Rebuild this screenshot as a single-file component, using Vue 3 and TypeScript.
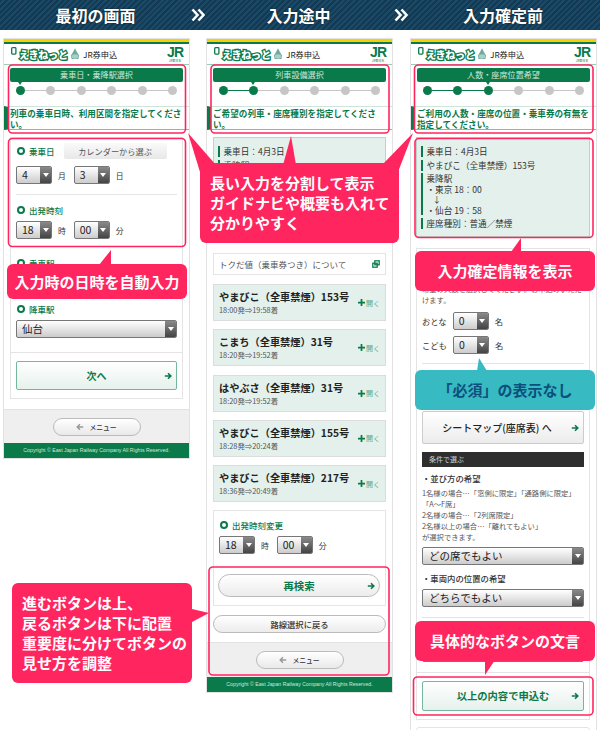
<script setup lang="ts">
interface Phone { id: number; title: string; step: string; active: number; msg: string }
const phones: Phone[] = [
  { id: 1, title: '最初の画面', step: '乗車日・乗降駅選択', active: 0, msg: '列車の乗車日時、利用区間を指定してください。' },
  { id: 2, title: '入力途中', step: '列車設備選択', active: 1, msg: 'ご希望の列車・座席種別を指定してください。' },
  { id: 3, title: '入力確定前', step: '人数・座席位置希望', active: 2, msg: 'ご利用の人数・座席の位置・乗車券の有無を指定してください。' },
]
const dots = [0, 1, 2, 3, 4, 5]
const trains = [
  { name: 'やまびこ（全車禁煙）153号', time: '18:00発⇒19:58着' },
  { name: 'こまち（全車禁煙）31号', time: '18:20発⇒19:52着' },
  { name: 'はやぶさ（全車禁煙）31号', time: '18:20発⇒19:52着' },
  { name: 'やまびこ（全車禁煙）155号', time: '18:28発⇒20:24着' },
  { name: 'やまびこ（全車禁煙）217号', time: '18:36発⇒20:49着' },
]
</script>

<template>
  <div class="page">
    <header class="tops">
      <h2 class="t1">最初の画面</h2>
      <svg class="chev" viewBox="0 0 14 14" width="14" height="14" fill="none" stroke="#fff" stroke-width="2.6"><path d="M1.5 1.5 6.5 7 1.5 12.5M7.5 1.5 12.5 7 7.5 12.5" /></svg>
      <h2 class="t2">入力途中</h2>
      <svg class="chev" viewBox="0 0 14 14" width="14" height="14" fill="none" stroke="#fff" stroke-width="2.6"><path d="M1.5 1.5 6.5 7 1.5 12.5M7.5 1.5 12.5 7 7.5 12.5" /></svg>
      <h2 class="t3">入力確定前</h2>
    </header>

    <main class="cols">
      <section v-for="p in phones" :key="p.id" class="phone" :class="'ph' + p.id">
        <div class="brand">
          <svg class="ticket" viewBox="0 0 6 8" width="6" height="8"><rect x=".7" y=".7" width="4.2" height="6.4" rx=".8" fill="#fff" stroke="#0b7a4b" stroke-width="1.3" /></svg>
          <span class="logo">えきねっと</span>
          <svg class="mascot" viewBox="0 0 12 14" width="10" height="12"><path d="M6 0 8 4 11 9 10 13H2L1 9 4 4Z" fill="#6fa9a0"/><ellipse cx="6" cy="10" rx="4" ry="2.6" fill="#a9cfc8"/></svg>
          <span class="brand-t">JR券申込</span>
          <span class="jr"><b>JR</b><i>JR東日本</i></span>
        </div>
        <div class="banner">{{ p.step }}</div>
        <div class="track">
          <template v-for="d in dots" :key="d">
            <span class="dot" :class="{ on: d <= p.active, cur: d === p.active }"></span>
            <span v-if="d < 5" class="seg" :class="{ on: d < p.active }"></span>
          </template>
        </div>
        <p class="msg">{{ p.msg }}</p>

        <template v-if="p.id === 1">
          <div class="box form1">
            <div class="lab-row">
              <span class="lab">乗車日</span>
              <span class="cal">カレンダーから選ぶ</span>
            </div>
            <div class="sel-row">
              <span class="sel"><em>4</em><i></i></span><span class="unit">月</span>
              <span class="sel"><em>3</em><i></i></span><span class="unit">日</span>
            </div>
            <hr class="rule r1" />
            <span class="lab">出発時刻</span>
            <div class="sel-row s2">
              <span class="sel"><em>18</em><i></i></span><span class="unit">時</span>
              <span class="sel"><em>00</em><i></i></span><span class="unit">分</span>
            </div>
            <span class="lab l3">乗車駅</span>
            <span class="sel wide w1"><em></em><i></i></span>
            <span class="lab l4">降車駅</span>
            <span class="sel wide w2"><em>仙台</em><i></i></span>
            <hr class="rule r2" />
            <div class="next">次へ<svg class="arr" viewBox="0 0 10 10" width="8" height="8" fill="none" stroke="#0b7a4b" stroke-width="2"><path d="M1 5H8M5 1.5 8.5 5 5 8.5" /></svg></div>
          </div>
          <div class="foot-area f1"><span class="menu"><svg viewBox="0 0 10 10" width="8" height="8" fill="none" stroke="#999" stroke-width="1.8"><path d="M9 5H2M5 1.5 1.5 5 5 8.5" /></svg>メニュー</span></div>
        </template>

        <template v-else-if="p.id === 2">
          <div class="summary s-2">
            <p class="sum-l">乗車日：4月3日</p>
            <p class="sum-l">乗降駅</p>
          </div>
          <div class="tokuda">トクだ値（乗車券つき）について
            <svg viewBox="0 0 10 10" width="8" height="8" fill="none" stroke="#0b7a4b" stroke-width="1.6"><rect x="3.5" y="1" width="5.5" height="5"/><rect x="1" y="4" width="5.5" height="5"/></svg>
          </div>
          <div v-for="t in trains" :key="t.name + t.time" class="train">
            <div>
              <div class="tn">{{ t.name }}</div>
              <div class="tt">{{ t.time }}</div>
            </div>
            <span class="open"><svg viewBox="0 0 8 8" width="7" height="7"><path d="M3 0H5V3H8V5H5V8H3V5H0V3H3Z" fill="#0b7a4b" /></svg>開く</span>
          </div>
          <div class="box form2">
            <span class="lab">出発時刻変更</span>
            <div class="sel-row s3">
              <span class="sel"><em>18</em><i></i></span><span class="unit">時</span>
              <span class="sel"><em>00</em><i></i></span><span class="unit">分</span>
            </div>
            <div class="research">再検索<svg class="arr" viewBox="0 0 10 10" width="8" height="8" fill="none" stroke="#0b7a4b" stroke-width="2"><path d="M1 5H8M5 1.5 8.5 5 5 8.5" /></svg></div>
          </div>
          <div class="backroute">路線選択に戻る</div>
          <div class="foot-area f2"><span class="menu"><svg viewBox="0 0 10 10" width="8" height="8" fill="none" stroke="#999" stroke-width="1.8"><path d="M9 5H2M5 1.5 1.5 5 5 8.5" /></svg>メニュー</span></div>
        </template>

        <template v-else>
          <div class="summary s-3">
            <p class="sum-l">乗車日：4月3日</p>
            <p class="sum-l">やまびこ（全車禁煙）153号</p>
            <div class="sum-l multi">乗降駅<br />・東京 18：00<br /><span class="down">↓</span><br />・仙台 19：58</div>
            <p class="sum-l">座席種別：普通／禁煙</p>
          </div>
          <div class="box form3">
            <p class="note nt">希望の人数を選択してください。お申込みいただ</p>
            <p class="note">けます。</p>
            <div class="pax"><span>おとな</span><span class="sel"><em>0</em><i></i></span><span>名</span></div>
            <div class="pax pax2"><span>こども</span><span class="sel"><em>0</em><i></i></span><span>名</span></div>
            <hr class="rule r3" />
            <div class="seatmap">シートマップ(座席表) へ<svg class="arr" viewBox="0 0 10 10" width="8" height="8" fill="none" stroke="#0b7a4b" stroke-width="2"><path d="M1 5H8M5 1.5 8.5 5 5 8.5" /></svg></div>
            <div class="cond">条件で選ぶ</div>
            <p class="sub">・並び方の希望</p>
            <p class="note n5">1名様の場合…「窓側に限定」「通路側に限定」<br />「A〜F席」<br />2名様の場合…「2列席限定」<br />2名様以上の場合…「離れてもよい」<br />が選択できます。</p>
            <span class="sel wide w3"><em>どの席でもよい</em><i></i></span>
            <p class="sub s2nd">・車両内の位置の希望</p>
            <span class="sel wide w3 w4"><em>どちらでもよい</em><i></i></span>
            <hr class="rule r4" />
            <span class="sel wide w5"><em></em><i></i></span>
            <hr class="rule r5" />
            <div class="apply">以上の内容で申込む<svg class="arr" viewBox="0 0 10 10" width="8" height="8" fill="none" stroke="#0b7a4b" stroke-width="2"><path d="M1 5H8M5 1.5 8.5 5 5 8.5" /></svg></div>
          </div>
          <div class="box last"></div>
        </template>

        <footer v-if="p.id !== 3" class="copy">Copyright © East Japan Railway Company All Rights Reserved.</footer>
      </section>
    </main>

    <svg class="marks" width="600" height="730" viewBox="0 0 600 730" fill="none">
      <g stroke="#ff2660" stroke-width="1.6">
        <rect x="8.5" y="65" width="177" height="68" rx="4" />
        <rect x="8.5" y="138.5" width="177" height="108" rx="4" />
        <rect x="211" y="65" width="178" height="68" rx="4" />
        <rect x="414.5" y="65" width="178.5" height="68" rx="4" />
        <rect x="415" y="138.5" width="178" height="99" rx="4" />
        <rect x="209" y="567" width="180" height="108" rx="4" />
        <rect x="413.5" y="677" width="179.5" height="38" rx="4" />
      </g>
      <g fill="#ff2660" stroke="none">
        <path d="M99 265 111 250 111 265Z" />
        <path d="M188 133 216 165 200 172Z" />
        <path d="M291 136 296 165 283 165Z" />
        <path d="M413 133 382 165 398 172Z" />
        <path d="M511 252 521 238 521 252Z" />
        <path d="M192 609 209 613 192 622Z" />
        <path d="M485 660 495 660 485 675Z" />
      </g>
      <path d="M477 371 479 358 487 371Z" fill="#38bac2" />
    </svg>

    <div class="call c1">入力時の日時を自動入力</div>
    <div class="call c2">長い入力を分割して表示<br />ガイドナビや概要も入れて<br />分かりやすく</div>
    <div class="call c3">進むボタンは上、<br />戻るボタンは下に配置<br />重要度に分けてボタンの<br />見せ方を調整</div>
    <div class="call c4">入力確定情報を表示</div>
    <div class="call c5">「必須」の表示なし</div>
    <div class="call c6">具体的なボタンの文言</div>
  </div>
</template>

<style>
html, body { margin: 0; background: #fff; }
</style>

<style scoped>
.page { position: relative; width: 600px; height: 730px; overflow: hidden; background: #fff; font-family: "Noto Sans CJK JP", "Noto Sans", sans-serif; color: #333; }
p, h2 { margin: 0; }

.tops { display: grid; grid-template-columns: 191px 14px 187px 18px 1fr; align-items: center; justify-items: center; height: 30px; background: repeating-linear-gradient(135deg, #123a55 0 2px, #1c4a66 2px 4px); color: #fff; }
.tops h2 { font-size: 16px; line-height: 30px; font-weight: 700; text-align: center; text-shadow: 0 0 2px rgba(0,0,0,.6); }
.t3 { padding-right: 4px; }

.cols { display: grid; grid-template-columns: 185px 185px 186px; column-gap: 18px; padding: 8px 0 0 4px; align-items: start; }
.ph3 { margin-left: 1px; }
.phone { background: #fff; box-shadow: 0 0 0 1px #e2e2e2; border-top: 3px solid #f7d000; position: relative; margin-top: 1px; }
.brand { display: flex; align-items: center; height: 23px; box-sizing: border-box; border-top: 2px solid #0b7a4b; border-bottom: 1px solid #9ccbb6; padding: 0 6px 0 7px; }
.ticket { margin: -6px 2px 0 0; flex: none; }
.logo { font-size: 10px; font-weight: 900; color: #fff; -webkit-text-stroke: 2.6px #0b7a4b; paint-order: stroke fill; letter-spacing: -.2px; width: 50px; flex: none; white-space: nowrap; }
.mascot { margin: 0 3px 0 1px; flex: none; }
.brand-t { font-size: 8.2px; color: #222; white-space: nowrap; }
.jr { margin-left: auto; display: flex; flex-direction: column; align-items: center; color: #0b7a4b; line-height: 1; }
.jr b { font: 700 14px/13px "Liberation Sans", sans-serif; letter-spacing: -1px; }
.jr i { font-size: 3px; font-style: normal; line-height: 4px; }

.banner { margin: 3px 6px 0; height: 14px; background: #0b7a4b; border-radius: 2px; color: #cfe8dc; font-size: 8.1px; line-height: 14px; text-align: center; }
.track { display: flex; align-items: center; padding: 0 12px; margin-top: 4px; }
.dot { position: relative; flex: none; width: 9px; height: 9px; border-radius: 50%; background: #c6c6c6; }
.dot.on { background: #0b7a4b; }
.dot.cur::before { content: ""; position: absolute; left: 2px; top: -4px; border: 2.5px solid transparent; border-top: 3px solid #0b7a4b; }
.seg { flex: 1; height: 1px; background: #c6c6c6; }
.seg.on { background: #0b7a4b; height: 1.5px; }
.msg { margin-top: 11px; height: 21px; border-top: 1px solid #cfe3da; border-bottom: 1px solid #7fbfa5; border-left: 4px solid #0b7a4b; padding: 1px 2px 0 2px; font-size: 8.6px; line-height: 11px; font-weight: 700; color: #0b7a4b; }

.box { margin: 7px 6px 0; border: 1px solid #e4e4e4; background: #fff; }
.lab { display: block; position: relative; padding-left: 13px; font-size: 8.5px; line-height: 12px; font-weight: 500; color: #0b7a4b; }
.lab::before { content: ""; position: absolute; left: 1px; top: 2px; width: 4px; height: 4px; border: 2.5px solid #0b7a4b; border-radius: 50%; background: #fff; }
.form1 { padding: 5px 5px 0; height: 262px; box-sizing: border-box; }
.lab-row { display: flex; align-items: center; gap: 9px; }
.cal { width: 103px; height: 16px; background: linear-gradient(#fafafa, #e8e8e8); border-radius: 2px; font-size: 8.2px; line-height: 16px; text-align: center; color: #555; }
.sel-row { display: flex; align-items: center; margin-top: 7px; }
.sel { display: inline-flex; align-items: stretch; width: 36px; height: 18px; box-sizing: border-box; border: 1px solid #777; border-radius: 2px; background: linear-gradient(#fff, #ccc); overflow: hidden; flex: none; }
.sel em { flex: 1; font-style: normal; font-size: 10.5px; line-height: 16px; color: #222; padding-left: 5px; white-space: nowrap; }
.sel i { position: relative; width: 11px; flex: none; background: linear-gradient(#8a8a8a, #444); }
.sel i::after { content: ""; position: absolute; left: 2.5px; top: 6px; border: 3px solid transparent; border-top: 4px solid #fff; }
.unit { font-size: 7.8px; margin: 0 8px 0 6px; color: #333; }
.rule { border: 0; height: 1px; background: #e4e4e4; margin: 0; }
.r1 { margin: 10px 0 9px; }
.s2 { margin-top: 5px; }
.l3 { margin-top: 18px; }
.wide { display: flex; width: 161px; }
.w1 { margin-top: 5px; }
.l4 { margin-top: 11px; }
.w2 { margin-top: 5px; }
.r2 { margin: 14px -5px 8px; }
.next { position: relative; height: 29px; box-sizing: border-box; border: 1px solid #74b79c; border-radius: 2px; background: linear-gradient(#fff, #e6f1ec); font-size: 10px; line-height: 27px; font-weight: 700; text-align: center; color: #0b7a4b; }
.arr { position: absolute; right: 4px; top: 50%; transform: translateY(-50%); }
.foot-area { display: flex; justify-content: center; align-items: center; height: 34px; background: #efefef; border-top: 1px solid #e2e2e2; box-sizing: border-box; }
.f1 { margin-top: 10px; }
.f2 { margin-top: 9px; height: 35px; }
.menu { display: flex; align-items: center; justify-content: center; gap: 5px; width: 88px; height: 18px; box-sizing: border-box; border: 1px solid #bbb; border-radius: 9px; background: linear-gradient(#fff, #e9e9e9); font-size: 6.8px; font-weight: 500; color: #333; }
.copy { height: 15px; background: #0b7a4b; color: #cfe8dc; font: 5.2px/15px "Liberation Sans", sans-serif; text-align: center; }

.summary { margin: 7px 6px 0; background: #e4f0eb; border: 1px solid #b9d6ca; box-sizing: border-box; padding: 8px 4px 0; }
.s-2 { height: 106px; }
.s-3 { height: 100px; margin-left: 5px; margin-right: 6px; }
.sum-l { border-left: 2.5px solid #0b7a4b; padding-left: 3.5px; font-size: 8.6px; line-height: 11px; margin-bottom: 2.5px; color: #333; white-space: nowrap; }
.multi { line-height: 10.5px; }
.down { margin-left: 6px; }
.tokuda { display: flex; align-items: center; justify-content: space-between; margin: 10px 6px 0; height: 22px; box-sizing: border-box; border: 1px solid #e4e4e4; padding: 0 5px 0 5px; font-size: 8.5px; color: #555; }
.train { display: flex; align-items: center; justify-content: space-between; margin: 8.3px 6px 0; height: 37px; box-sizing: border-box; background: #e4f0eb; border: 1px solid #dcdcdc; padding: 0 5px 0 5px; }
.tokuda + .train { margin-top: 9px; }
.tn { font-size: 10.2px; font-weight: 700; line-height: 14px; color: #222; white-space: nowrap; }
.tt { font-size: 7.4px; line-height: 10px; color: #555; margin-top: 1px; white-space: nowrap; }
.open { display: flex; align-items: center; gap: 1px; font-size: 7px; color: #5ba789; white-space: nowrap; }
.form2 { padding: 8px 5px 0; height: 96px; box-sizing: border-box; margin-top: 8px; }
.s3 { margin-top: 5px; }
.research { position: relative; margin: 20px 0 0 -1px; height: 23px; box-sizing: border-box; border: 1px solid #bbb; border-radius: 12px; background: linear-gradient(#fff, #ececec); font-size: 10.4px; line-height: 21px; font-weight: 700; text-align: center; color: #0b7a4b; }
.backroute { margin: 9px 6px 0; height: 18px; box-sizing: border-box; border: 1px solid #bbb; border-radius: 10px; background: linear-gradient(#fff, #ececec); font-size: 8.3px; line-height: 16px; font-weight: 500; text-align: center; color: #333; }

.form3 { padding: 0 5px; height: 472px; box-sizing: border-box; margin: 11px 6px 0 5px; }
.note { font-size: 7.3px; line-height: 11px; color: #555; white-space: nowrap; }
.nt { margin-top: 35px; }
.pax { display: flex; align-items: center; gap: 6px; margin-top: 6px; font-size: 8.3px; color: #333; }
.r3 { margin: 9px 0 47px; }
.seatmap { position: relative; height: 33px; box-sizing: border-box; border: 1px solid #ccc; border-radius: 2px; background: linear-gradient(#fff, #ececec); font-size: 10px; line-height: 31px; font-weight: 500; text-align: center; color: #222; padding-right: 12px; }
.cond { margin-top: 8px; height: 15px; background: #2e2e2e; color: #ccc; font-size: 7px; line-height: 15px; padding-left: 7px; }
.sub { margin-top: 5px; font-size: 8.4px; line-height: 12px; color: #333; font-weight: 500; }
.n5 { margin-top: 3.5px; }
.w3 { width: 162px; margin-top: 4.5px; }
.w3 em { padding-left: 6px; }
.s2nd { margin-top: 7px; }
.w4 { margin-top: 5px; }
.r4 { margin: 10px 0 26px; }
.w5 { width: 162px; }
.r5 { margin: 10px -5px 8px; }
.apply { position: relative; height: 30px; box-sizing: border-box; border: 1px solid #74b79c; border-radius: 2px; background: linear-gradient(#fff, #e6f1ec); font-size: 10.3px; line-height: 28px; font-weight: 700; text-align: center; color: #0b7a4b; }
.last { height: 30px; margin: 7px 6px 0 5px; border-radius: 3px; }

.marks { position: absolute; left: 0; top: 0; pointer-events: none; }
.call { position: absolute; box-sizing: border-box; background: #ff2660; color: #fff; border-radius: 6px; font-weight: 700; font-size: 15px; line-height: 20px; white-space: nowrap; }
.c1 { left: 7px; top: 264px; width: 180px; height: 35px; line-height: 35px; text-align: center; }
.c2 { left: 200px; top: 163px; width: 199px; height: 80px; padding: 10px 10px; }
.c3 { left: 12px; top: 583px; width: 180px; height: 100px; padding: 10px 10px; }
.c4 { left: 415px; top: 251px; width: 180px; height: 40px; line-height: 40px; text-align: center; }
.c5 { left: 415px; top: 370px; width: 180px; height: 40px; line-height: 40px; text-align: center; background: #38bac2; color: #0d4f7c; }
.c6 { left: 415px; top: 621px; width: 180px; height: 40px; line-height: 40px; text-align: center; }
</style>
